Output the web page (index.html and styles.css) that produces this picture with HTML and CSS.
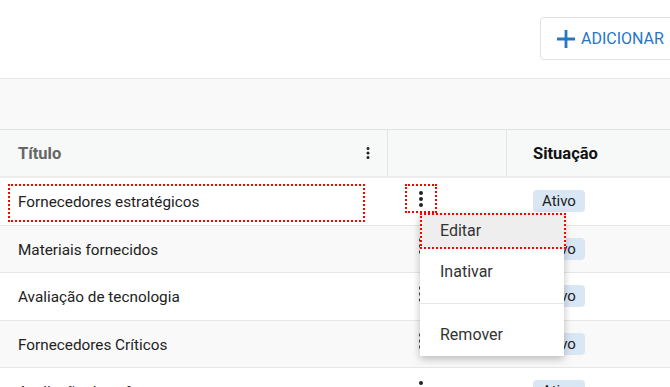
FILE: index.html
```html
<!DOCTYPE html>
<html lang="pt-BR">

<head>
    <meta charset="UTF-8">
    <meta name="viewport" content="width=device-width, initial-scale=1.0">
    <title>Listas</title>
    <link rel="stylesheet" href="styles.css">
</head>

<body>
    <div class="page">
        <div class="toolbar">
            <button class="add-btn">
                <svg class="plus" viewBox="0 0 18 18" width="18" height="18"><path d="M7.6 0h2.8v7.6H18v2.8h-7.6V18H7.6v-7.6H0V7.6h7.6z" fill="currentColor"/></svg>
                ADICIONAR
            </button>
        </div>
        <div class="band"></div>

        <div class="grid">
            <div class="row head">
                <div class="cell title-col">
                    <span>Título</span>
                    <svg class="kebab-sm" viewBox="0 0 24 24" width="18" height="18"><path d="M12,16A2,2 0 0,1 14,18A2,2 0 0,1 12,20A2,2 0 0,1 10,18A2,2 0 0,1 12,16M12,10A2,2 0 0,1 14,12A2,2 0 0,1 12,14A2,2 0 0,1 10,12A2,2 0 0,1 12,10M12,4A2,2 0 0,1 14,6A2,2 0 0,1 12,8A2,2 0 0,1 10,6A2,2 0 0,1 12,4Z"/></svg>
                </div>
                <div class="cell actions-col"></div>
                <div class="cell status-col">Situação</div>
            </div>

            <div class="row">
                <div class="cell title-col"><div class="title-box marked">Fornecedores estratégicos</div></div>
                <div class="cell actions-col">
                    <button class="kebab marked">
                        <svg viewBox="0 0 24 24" width="24" height="24"><path d="M12,16A2,2 0 0,1 14,18A2,2 0 0,1 12,20A2,2 0 0,1 10,18A2,2 0 0,1 12,16M12,10A2,2 0 0,1 14,12A2,2 0 0,1 12,14A2,2 0 0,1 10,12A2,2 0 0,1 12,10M12,4A2,2 0 0,1 14,6A2,2 0 0,1 12,8A2,2 0 0,1 10,6A2,2 0 0,1 12,4Z"/></svg>
                    </button>
                    <!-- menu aberto -->
                    <div class="menu">
                        <div class="menu-item edit">Editar</div>
                        <div class="menu-item inactivate">Inativar</div>
                        <div class="menu-item remove">Remover</div>
                    </div>
                </div>
                <div class="cell status-col"><span class="badge">Ativo</span></div>
            </div>

            <div class="row alt">
                <div class="cell title-col"><div class="title-box">Materiais fornecidos</div></div>
                <div class="cell actions-col">
                    <button class="kebab"><svg viewBox="0 0 24 24" width="24" height="24"><path d="M12,16A2,2 0 0,1 14,18A2,2 0 0,1 12,20A2,2 0 0,1 10,18A2,2 0 0,1 12,16M12,10A2,2 0 0,1 14,12A2,2 0 0,1 12,14A2,2 0 0,1 10,12A2,2 0 0,1 12,10M12,4A2,2 0 0,1 14,6A2,2 0 0,1 12,8A2,2 0 0,1 10,6A2,2 0 0,1 12,4Z"/></svg></button>
                </div>
                <div class="cell status-col"><span class="badge">Ativo</span></div>
            </div>

            <div class="row">
                <div class="cell title-col"><div class="title-box">Avaliação de tecnologia</div></div>
                <div class="cell actions-col">
                    <button class="kebab"><svg viewBox="0 0 24 24" width="24" height="24"><path d="M12,16A2,2 0 0,1 14,18A2,2 0 0,1 12,20A2,2 0 0,1 10,18A2,2 0 0,1 12,16M12,10A2,2 0 0,1 14,12A2,2 0 0,1 12,14A2,2 0 0,1 10,12A2,2 0 0,1 12,10M12,4A2,2 0 0,1 14,6A2,2 0 0,1 12,8A2,2 0 0,1 10,6A2,2 0 0,1 12,4Z"/></svg></button>
                </div>
                <div class="cell status-col"><span class="badge">Ativo</span></div>
            </div>

            <div class="row alt">
                <div class="cell title-col"><div class="title-box">Fornecedores Críticos</div></div>
                <div class="cell actions-col">
                    <button class="kebab"><svg viewBox="0 0 24 24" width="24" height="24"><path d="M12,16A2,2 0 0,1 14,18A2,2 0 0,1 12,20A2,2 0 0,1 10,18A2,2 0 0,1 12,16M12,10A2,2 0 0,1 14,12A2,2 0 0,1 12,14A2,2 0 0,1 10,12A2,2 0 0,1 12,10M12,4A2,2 0 0,1 14,6A2,2 0 0,1 12,8A2,2 0 0,1 10,6A2,2 0 0,1 12,4Z"/></svg></button>
                </div>
                <div class="cell status-col"><span class="badge">Ativo</span></div>
            </div>

            <div class="row">
                <div class="cell title-col"><div class="title-box">Avaliação de software</div></div>
                <div class="cell actions-col">
                    <button class="kebab"><svg viewBox="0 0 24 24" width="24" height="24"><path d="M12,16A2,2 0 0,1 14,18A2,2 0 0,1 12,20A2,2 0 0,1 10,18A2,2 0 0,1 12,16M12,10A2,2 0 0,1 14,12A2,2 0 0,1 12,14A2,2 0 0,1 10,12A2,2 0 0,1 12,10M12,4A2,2 0 0,1 14,6A2,2 0 0,1 12,8A2,2 0 0,1 10,6A2,2 0 0,1 12,4Z"/></svg></button>
                </div>
                <div class="cell status-col"><span class="badge">Ativo</span></div>
            </div>
        </div>
    </div>
</body>

</html>
```

FILE: styles.css
```css
body {
    margin: 0;
    font-family: Roboto, "Liberation Sans", Arial, sans-serif;
    background-color: #fff;
    color: #222;
    overflow: hidden;
}

.page {
    width: 670px;
    height: 387px;
    overflow: hidden;
}

.toolbar {
    height: 79px;
    box-sizing: border-box;
    padding: 17px 0 0 540px;
    border-bottom: 1px solid #e6e6e6;
}

.add-btn {
    display: flex;
    align-items: center;
    gap: 6px;
    height: 43px;
    width: 170px;
    padding: 0 0 0 16px;
    background: #fff;
    border: 1px solid #e2e2e2;
    border-radius: 4px;
    font-family: inherit;
    font-size: 16px;
    color: #2676c8;
    white-space: nowrap;
    cursor: pointer;
}

.plus {
    flex: none;
}

.band {
    height: 51px;
    box-sizing: border-box;
    background-color: #f9f9f9;
    border-bottom: 1px solid #e3e3e3;
}

.grid {
    display: flex;
    flex-direction: column;
}

.row {
    display: grid;
    grid-template-columns: 388px 119px 1fr;
    height: 47.5px;
    box-sizing: border-box;
    border-bottom: 1px solid #e6e6e6;
    background: #fff;
}

.row.alt {
    background: #f9f9f9;
}

.row.head {
    height: 48px;
    background: #f7f8f8;
    border-bottom: 2px solid #ececec;
}

.cell {
    display: flex;
    align-items: center;
    font-size: 15.3px;
    min-width: 0;
}

.head .cell {
    font-weight: bold;
    font-size: 16.5px;
}

.head .title-col {
    justify-content: space-between;
    padding: 0 10px 0 18px;
    color: #666;
    border-right: 1px solid #e6e6e6;
}

.head .actions-col {
    border-right: 1px solid #e6e6e6;
}

.head .status-col {
    color: #111;
}

.kebab-sm {
    fill: #222;
}

.title-box {
    align-self: flex-start;
    width: 357px;
    height: 38px;
    margin: 6px 0 0 8px;
    padding: 0 0 2px 8px;
    box-sizing: border-box;
    display: flex;
    align-items: center;
    border: 2px dotted transparent;
    white-space: nowrap;
}

.marked {
    border-color: #f00 !important;
}

.actions-col {
    position: relative;
}

.kebab {
    align-self: flex-start;
    margin: 6px 0 0 17px;
    width: 32px;
    height: 29px;
    padding: 0;
    box-sizing: border-box;
    display: flex;
    align-items: center;
    justify-content: center;
    background: none;
    border: 2px dotted transparent;
    cursor: pointer;
}

.kebab svg {
    fill: #222;
}

.status-col {
    padding-left: 26px;
}

.badge {
    display: inline-block;
    height: 22px;
    line-height: 22px;
    padding: 0 9px;
    border-radius: 4px;
    background-color: #d9e7f4;
    color: #222;
    font-size: 15px;
}

.menu {
    position: absolute;
    left: 32px;
    top: 35px;
    width: 144px;
    background: #fff;
    box-shadow: 0 3px 8px rgba(0, 0, 0, 0.25);
    z-index: 10;
}

.menu-item {
    padding-left: 20px;
    font-size: 16px;
    line-height: 20px;
    color: #333;
    cursor: pointer;
}

.menu-item.edit {
    padding-top: 8px;
    padding-bottom: 8px;
    background-color: #eee;
    outline: 2px dotted #f00;
    outline-offset: -2px;
    margin-right: -2px;
}

.menu-item.inactivate {
    padding-top: 13px;
    padding-bottom: 21px;
    border-bottom: 1px solid #e6e6e6;
}

.menu-item.remove {
    padding-top: 21px;
    padding-bottom: 11px;
}
```
